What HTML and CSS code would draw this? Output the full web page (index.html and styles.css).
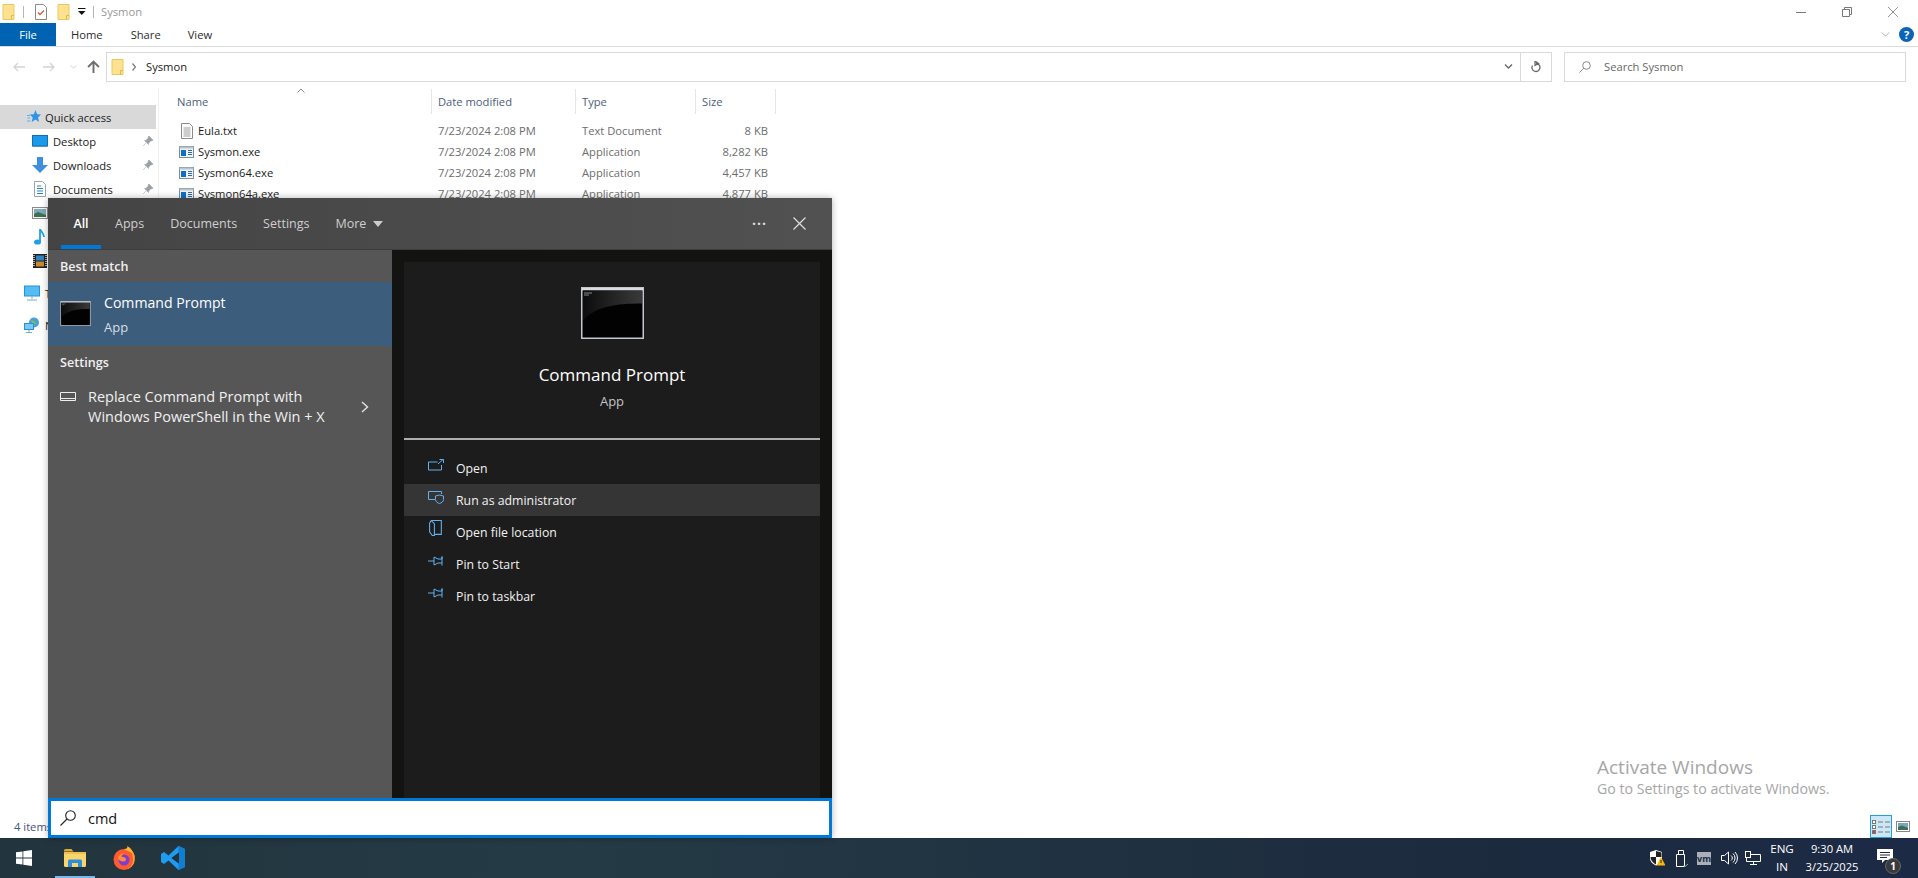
FILE: index.html
```html
<!DOCTYPE html>
<html lang="en">
<head>
<meta charset="utf-8">
<title>Sysmon</title>
<link rel="stylesheet" href="styles.css">
</head>
<body>
<svg class="defs" aria-hidden="true">
  <defs>
    <linearGradient id="cmdglow" x1="0" y1="0" x2="1" y2="0"><stop offset="0" stop-color="#0c0c0c"/><stop offset="1" stop-color="#3a3a3a"/></linearGradient>
  </defs>
  <symbol id="folder" viewBox="0 0 12 16"><path d="M.5.5h11v15H.5z" fill="#ffe28f" stroke="#e9c95f"/><path d="M9 15.5v-4h2.5" fill="none" stroke="#e2b93f"/></symbol>
  <symbol id="exe" viewBox="0 0 15 12"><rect x=".5" y=".5" width="14" height="11" fill="#f2f2f2" stroke="#7f8c99"/><rect x=".5" y=".5" width="14" height="2" fill="#b8c4d0"/><rect x="2" y="4" width="5" height="6" fill="#0e6fc9"/><path d="M9 4.500h4M9 6.500h4M9 8.500h4" stroke="#2d6ba8"/></symbol>
  <symbol id="pin" viewBox="0 0 10 10"><path d="M6 0l4 4-1 1-1-.3-2.200 2.200L5.500 8.500 1.500 4.500 3 4.200 5.300 2 5 1zM3 7L0 10" fill="#9aa0a6" stroke="#9aa0a6" stroke-width=".5"/></symbol>
  <symbol id="cmdicon" viewBox="0 0 63 52"><rect x=".75" y=".75" width="61.500" height="50.500" fill="#020202" stroke="#c3c8ce" stroke-width="1.500"/><rect x="1" y="1" width="61" height="2.500" fill="#d8dce1"/><path d="M2 3.500h59v13c-26 0-47 3-59 17z" fill="url(#cmdglow)"/><path d="M3 6h8M3 8h5" stroke="#aaa" stroke-width=".8"/></symbol>
  <symbol id="pinmenu" viewBox="0 0 16 12"><path d="M0 6h6M6 2l4 2h4V1.500M14 1.500v9M14 8h-4l-4 2V2" fill="none" stroke="#63b0ee"/></symbol>
</svg>

<div class="window">
  <header class="titlebar">
    <svg class="qa-folder"><use href="#folder"/></svg>
    <span class="qa-sep"></span>
    <svg class="qa-check" viewBox="0 0 12 16"><path d="M.5.5h8l3 3v12H.5z" fill="#fff" stroke="#8a8a8a"/><path d="M3 8.500l2 2 4-4" fill="none" stroke="#e2572b" stroke-width="1.300"/></svg>
    <svg class="qa-folder qa-folder2"><use href="#folder"/></svg>
    <svg class="qa-drop" viewBox="0 0 8 8"><path d="M0 0h7.500v1H0zM0 3h7.500L3.750 7z" fill="#111"/></svg>
    <span class="qa-sep qa-sep2"></span>
    <span class="win-title">Sysmon</span>
    <div class="win-controls">
      <svg class="ctl" viewBox="0 0 10 10"><path d="M0 5.500h10" stroke="#777"/></svg>
      <svg class="ctl" viewBox="0 0 10 10"><path d="M.5 2.500h7v7h-7zM2.500 2.500v-2h7v7h-2" fill="none" stroke="#777"/></svg>
      <svg class="ctl" viewBox="0 0 10 10"><path d="M0 0l10 10M10 0L0 10" stroke="#777" stroke-width=".8"/></svg>
    </div>
  </header>

  <nav class="tabs">
    <span class="file-tab">File</span>
    <span class="tab tab-home">Home</span>
    <span class="tab tab-share">Share</span>
    <span class="tab tab-view">View</span>
    <svg class="rib-chev" viewBox="0 0 10 6"><path d="M.5.500L5 5 9.500.5" fill="none" stroke="#999"/></svg>
    <span class="help">?</span>
  </nav>

  <div class="addr-row">
    <svg class="nav-arrow nav-back" viewBox="0 0 12 10"><path d="M12 5H1M5 1L1 5l4 4" fill="none" stroke="#d4d4d4" stroke-width="1.300"/></svg>
    <svg class="nav-arrow nav-fwd" viewBox="0 0 12 10"><path d="M0 5h11M7 1l4 4-4 4" fill="none" stroke="#d4d4d4" stroke-width="1.300"/></svg>
    <svg class="nav-down" viewBox="0 0 7 4"><path d="M.5.500L3.500 3 6.500.5" fill="none" stroke="#d4d4d4"/></svg>
    <svg class="nav-up" viewBox="0 0 12 12"><path d="M6 12V1.500M1 6.500l5-5 5 5" fill="none" stroke="#6f6f6f" stroke-width="1.800"/></svg>
    <div class="addr">
      <svg class="addr-folder"><use href="#folder"/></svg>
      <svg class="addr-chev" viewBox="0 0 4 8"><path d="M.5.500L3.500 4 .5 7.500" fill="none" stroke="#777" stroke-width="1.200"/></svg>
      <span class="addr-text">Sysmon</span>
      <svg class="addr-drop" viewBox="0 0 8 5"><path d="M.5.500L4 4 7.500.5" fill="none" stroke="#666" stroke-width="1.300"/></svg>
      <span class="addr-refresh"><svg class="refresh" viewBox="0 0 10 12"><path d="M5 2.500a4 4 0 1 1-3.500 2M4 0v4.500L7.500 2.500z" fill="none" stroke="#666" stroke-width="1.300"/></svg></span>
    </div>
    <div class="search">
      <svg class="search-icon" viewBox="0 0 12 12"><circle cx="7.500" cy="4.500" r="3.800" fill="none" stroke="#888"/><path d="M4.800 7.200L.5 11.500" stroke="#888"/></svg>
      <span class="search-text">Search Sysmon</span>
    </div>
  </div>

  <main class="main">
    <aside class="side">
      <div class="side-item side-active">
        <svg class="star" viewBox="0 0 14 14"><path d="M8.500 0l1.600 4.300 3.900.3-3 2.900 1 4.500-3.500-2.400-3.800 2.400 1-4.500-3-2.900 4.200-.3z" fill="#2f93e6"/><path d="M0 5.500h3M.5 8h2.500M0 11h3.500" stroke="#5aaeea"/></svg>
        <span>Quick access</span>
      </div>
      <div class="side-item sub">
        <svg class="side-ic" viewBox="0 0 16 12"><rect x=".5" y=".5" width="15" height="10.500" fill="#1a9ae8" stroke="#0c6fb8"/><path d="M1 11.500h14" stroke="#5d8fb3"/></svg>
        <span class="side-label">Desktop</span><svg class="pin"><use href="#pin"/></svg>
      </div>
      <div class="side-item sub">
        <svg class="side-ic" viewBox="0 0 16 16"><path d="M5 0h6v8h5l-8 8-8-8h5z" fill="#3d8fe0"/></svg>
        <span class="side-label">Downloads</span><svg class="pin"><use href="#pin"/></svg>
      </div>
      <div class="side-item sub">
        <svg class="side-ic" viewBox="0 0 16 16"><path d="M2.500.5h8l3 3v12h-11z" fill="#fff" stroke="#9aa3ab"/><path d="M5 5h4M5 7.500h6M5 10h6M5 12.500h6" stroke="#2f84c9"/></svg>
        <span class="side-label">Documents</span><svg class="pin"><use href="#pin"/></svg>
      </div>
      <div class="side-item sub">
        <svg class="side-ic" viewBox="0 0 16 12"><rect x=".5" y=".5" width="15" height="11" fill="#f4f4f4" stroke="#8a8a8a"/><rect x="2" y="2" width="12" height="8" fill="#7fa9bb"/><path d="M2 7l4-2 8 3v2H2z" fill="#3f6f52"/></svg>
        <span class="side-label">Pictures</span>
      </div>
      <div class="side-item sub">
        <svg class="side-ic" viewBox="0 0 16 16"><ellipse cx="5.500" cy="13" rx="3.500" ry="2.600" fill="#1fa0ea"/><path d="M8 13V0c1 3 4 4 4 8" fill="none" stroke="#1fa0ea" stroke-width="1.800"/></svg>
        <span class="side-label">Music</span>
      </div>
      <div class="side-item sub">
        <svg class="side-ic" viewBox="0 0 16 16"><rect x="1" y="1" width="14" height="14" fill="#222"/><path d="M2 2v12M14 2v12" stroke="#ddd" stroke-width="1.500" stroke-dasharray="1 1"/><rect x="4" y="2.500" width="8" height="5" fill="#2c85c4"/><rect x="4" y="8.500" width="8" height="5" fill="#c98a2c"/></svg>
        <span class="side-label">Videos</span>
      </div>
      <div class="side-item tree">
        <svg class="side-ic" viewBox="0 0 16 15"><rect x=".5" y=".5" width="15" height="10" fill="#55bdf2" stroke="#2492d8"/><path d="M8 11v2M3 14.500h10" stroke="#7ea9c6" stroke-width="1.200"/></svg>
        <span>This PC</span>
      </div>
      <div class="side-item tree">
        <svg class="side-ic" viewBox="0 0 16 16"><circle cx="10" cy="5.500" r="5" fill="#4a9fd8"/><path d="M7 3l3 1 2 3-3 1z" fill="#7ec24a"/><rect x=".5" y="6.500" width="9" height="6" fill="#7cc8f2" stroke="#2492d8"/><path d="M5 13v2M2 15.500h6" stroke="#7ea9c6"/></svg>
        <span>Network</span>
      </div>
    </aside>

    <section class="list">
      <div class="list-head">
        <span class="col-name">Name<svg class="sort" viewBox="0 0 8 5"><path d="M.5 4.500L4 1l3.500 3.500" fill="none" stroke="#888"/></svg></span>
        <span class="col-date">Date modified</span>
        <span class="col-type">Type</span>
        <span class="col-size">Size</span>
      </div>
      <div class="row">
        <span class="col-name"><svg class="file-ic" viewBox="0 0 15 16"><path d="M2.500.5h8l3 3v12h-11z" fill="#fff" stroke="#8a8a8a"/><path d="M4.500 5h7M4.500 7h7M4.500 9h7M4.500 11h7M4.500 13h7" stroke="#9a9a9a"/></svg><b>Eula.txt</b></span>
        <span class="col-date">7/23/2024 2:08 PM</span><span class="col-type">Text Document</span><span class="col-size">8 KB</span>
      </div>
      <div class="row">
        <span class="col-name"><svg class="file-ic"><use href="#exe"/></svg><b>Sysmon.exe</b></span>
        <span class="col-date">7/23/2024 2:08 PM</span><span class="col-type">Application</span><span class="col-size">8,282 KB</span>
      </div>
      <div class="row">
        <span class="col-name"><svg class="file-ic"><use href="#exe"/></svg><b>Sysmon64.exe</b></span>
        <span class="col-date">7/23/2024 2:08 PM</span><span class="col-type">Application</span><span class="col-size">4,457 KB</span>
      </div>
      <div class="row">
        <span class="col-name"><svg class="file-ic"><use href="#exe"/></svg><b>Sysmon64a.exe</b></span>
        <span class="col-date">7/23/2024 2:08 PM</span><span class="col-type">Application</span><span class="col-size">4,877 KB</span>
      </div>
      <div class="activate">
        <div class="act-1">Activate Windows</div>
        <div class="act-2">Go to Settings to activate Windows.</div>
      </div>
    </section>
  </main>

  <footer class="status">
    <span>4 items</span>
    <div class="views">
      <span class="view-btn"><svg class="view-ic" viewBox="0 0 18 14"><rect x=".5" y=".5" width="3" height="3" fill="#fff" stroke="#777"/><rect x=".5" y="5.500" width="3" height="3" fill="#fff" stroke="#777"/><rect x=".5" y="10.500" width="3" height="3" fill="#e33" stroke="#777"/><path d="M6 2h5M13 2h5M6 7h5M13 7h5M6 12h5M13 12h5" stroke="#777"/></svg></span>
      <svg class="view-ic2" viewBox="0 0 14 11"><rect x=".5" y=".5" width="13" height="10" fill="#fff" stroke="#888"/><rect x="2" y="2" width="10" height="7" fill="#7aa6bd"/><path d="M2 6l4-1.500L12 7v2H2z" fill="#3f6f52"/></svg>
    </div>
  </footer>

  <div class="taskbar">
    <svg class="tb-start" viewBox="0 0 16 16"><path d="M0 2.300l6.500-.9v6.200H0zM7.300 1.300L16 0v7.600H7.300zM0 8.400h6.500v6.200L0 13.700zM7.300 8.400H16V16l-8.700-1.200z" fill="#fff"/></svg>
    <span class="tb-app tb-active">
      <svg class="tb-ic" viewBox="0 0 22 18"><path d="M0 1.500A1.500 1.500 0 0 1 1.500 0h6l2 2.500H0z" fill="#e0a92e"/><path d="M0 3h22v13.500a1.500 1.500 0 0 1-1.500 1.500h-19A1.500 1.500 0 0 1 0 16.500z" fill="#f8d66d"/><path d="M0 3h22v2H0z" fill="#eec04c"/><path d="M4 18v-6a1.500 1.500 0 0 1 1.500-1.500h11A1.500 1.500 0 0 1 18 12v6h-4v-4H8v4z" fill="#2c8fd8"/></svg>
    </span>
    <span class="tb-app">
      <svg class="tb-ic-fx" viewBox="0 0 24 24"><circle cx="12" cy="13.500" r="10.500" fill="#ff5b2e"/><path d="M12 3C15 5 22 6 23 13 23 9 20 2 15 0c1 2 0 3-3 3z" fill="#ffb52e"/><path d="M20 5c3 3 3.500 8 2 12-1.500 3-4 5-7 6 4-2 6-5 6-9 0-3-1-6-1-9z" fill="#ffa02e"/><circle cx="12" cy="14" r="5.500" fill="#7a3fd0"/><path d="M6 13c0-4 4-6 7-5-3 0-4 2-3 3 2 0 4 .5 4 2.500 0 1-1 2-2.500 2S8 15 6 13z" fill="#ff8a3a"/></svg>
    </span>
    <span class="tb-app">
      <svg class="tb-ic-vs" viewBox="0 0 24 24"><path d="M17.500 0L24 3v18l-6.500 3-10-9.500L3 18l-3-2v-8l3-2 4.500 3.500zM18 6.500L10.500 12l7.500 5.500z" fill="#1f9cf0"/><path d="M17.500 0L24 3v18l-6.500 3z" fill="#0f7fd0"/><path d="M18 6.500L10.500 12l7.500 5.500z" fill="#20333f"/></svg>
    </span>
    <div class="tray">
      <svg class="tr-shield" viewBox="0 0 16 16"><path d="M7 0l6 2v6c0 4-3 6-6 7.500C4 14 1 12 1 8V2z" fill="#fff"/><path d="M7 1v6h5.500V2.500zM7 7H1.500c0 3 2.500 6 5.500 7.500z" fill="#222"/><path d="M12 7l4.500 8.500h-9z" fill="#f5b50a"/><path d="M12 10v3" stroke="#222"/></svg>
      <svg class="tr-usb" viewBox="0 0 12 17"><path d="M2.500 4.500V.5h5v4zM.5 4.500h8v12h-8z" fill="none" stroke="#fff"/><path d="M7.500 15.500l1.500 1 3-2.500" fill="none" stroke="#9aa"/></svg>
      <span class="tr-vm">vm</span>
      <svg class="tr-vol" viewBox="0 0 17 14"><path d="M.5 4.500h3l4-3.500v12l-4-3.500h-3z" fill="none" stroke="#fff"/><path d="M10 4.500a3 3 0 0 1 0 5M12 2.500a6 6 0 0 1 0 9M14 1a8.500 8.500 0 0 1 0 12" fill="none" stroke="#fff"/></svg>
      <svg class="tr-net" viewBox="0 0 16 14"><path d="M4.500 3.500H15.500V10.500H1.500V7M8.500 10.500v3M5 13.500h7" fill="none" stroke="#fff"/><rect x=".5" y=".5" width="5" height="6" fill="#1c2a46" stroke="#fff"/></svg>
      <div class="tr-lang"><div>ENG</div><div>IN</div></div>
      <div class="tr-clock"><div>9:30 AM</div><div>3/25/2025</div></div>
      <span class="tr-note">
        <svg class="tr-note-ic" viewBox="0 0 16 14"><path d="M0 0h16v11H8l-3 3v-3H0z" fill="#fff"/><path d="M3 3.500h10M3 6h10M3 8.500h7" stroke="#1c2a46"/></svg>
        <span class="tr-badge">1</span>
      </span>
    </div>
  </div>

  <div class="panel">
    <div class="p-head">
      <span class="p-tab p-tab-on">All</span>
      <span class="p-tab">Apps</span>
      <span class="p-tab">Documents</span>
      <span class="p-tab">Settings</span>
      <span class="p-tab">More<svg class="p-caret" viewBox="0 0 10 6"><path d="M0 0h10L5 6z" fill="#ccc"/></svg></span>
      <span class="p-dots">···</span>
      <svg class="p-close" viewBox="0 0 13 13"><path d="M.5.500l12 12M12.500.5l-12 12" stroke="#ddd" stroke-width="1.200"/></svg>
    </div>
    <div class="p-body">
      <div class="p-left">
        <div class="p-section">Best match</div>
        <div class="p-best">
          <svg class="p-best-ic"><use href="#cmdicon"/></svg>
          <div><div class="p-best-t">Command Prompt</div><div class="p-best-s">App</div></div>
        </div>
        <div class="p-section p-section2">Settings</div>
        <div class="p-setting">
          <svg class="p-set-ic" viewBox="0 0 16 9"><path d="M.5.500h15v8H.5z" fill="none" stroke="#eee"/><path d="M1 6.500h14" stroke="#eee"/></svg>
          <div class="p-set-t">Replace Command Prompt with Windows PowerShell in the Win + X</div>
          <svg class="p-chev" viewBox="0 0 8 12"><path d="M1 1l5.500 5L1 11" fill="none" stroke="#ddd" stroke-width="1.500"/></svg>
        </div>
      </div>
      <div class="p-right">
        <div class="card">
          <svg class="card-ic"><use href="#cmdicon"/></svg>
          <div class="card-t">Command Prompt</div>
          <div class="card-s">App</div>
          <div class="card-rule"></div>
          <ul class="menu">
            <li><svg class="m-ic" viewBox="0 0 16 12"><path d="M9.500 3H.5v8h13V6M10 5l5-4.500M11.500.5H15.500V4" fill="none" stroke="#63b0ee"/></svg>Open</li>
            <li class="m-hover"><svg class="m-ic" viewBox="0 0 16 14"><path d="M7 9.500H.5v-8h13V4" fill="none" stroke="#63b0ee"/><path d="M11.500 5l4 1v3.500c0 2-2 3.500-4 4-2-.5-4-2-4-4V6z" fill="#353535" stroke="#63b0ee"/></svg>Run as administrator</li>
            <li><svg class="m-ic m-ic-tall" viewBox="0 0 13 15"><path d="M2 .5h9.500v13H5M2 .5L.5 3v8L3 14.500H5V3.500L2 .5" fill="none" stroke="#63b0ee"/></svg>Open file location</li>
            <li><svg class="m-ic"><use href="#pinmenu"/></svg>Pin to Start</li>
            <li><svg class="m-ic"><use href="#pinmenu"/></svg>Pin to taskbar</li>
          </ul>
        </div>
      </div>
    </div>
    <div class="p-search">
      <svg class="p-search-ic" viewBox="0 0 16 16"><circle cx="10.500" cy="5.500" r="4.800" fill="none" stroke="#222" stroke-width="1.100"/><path d="M7 9L.5 15.500" stroke="#222" stroke-width="1.100"/></svg>
      <span>cmd</span>
    </div>
  </div>
</div>
</body>
</html>
```
FILE: styles.css
```css
* { box-sizing: border-box; }
html, body { margin: 0; padding: 0; height: 100%; overflow: hidden; background: #fff; }
body { font-family: "Open Sans", "Noto Sans", sans-serif; font-size: 11.200px; color: #1a1a1a; }
.defs { width: 0; height: 0; display: block; overflow: hidden; }
svg { display: block; flex: none; }

.window { position: relative; width: 1918px; height: 878px; display: flex; flex-direction: column; overflow: hidden; }

.titlebar { height: 23px; display: flex; align-items: center; padding-left: 2px; flex: none; }
.qa-folder { width: 13px; height: 16px; }
.qa-sep { width: 1px; height: 12px; background: #b5b5b5; margin-left: 8px; }
.qa-check { width: 12px; height: 16px; margin-left: 11px; }
.qa-folder2 { margin-left: 10px; }
.qa-drop { width: 8px; height: 8px; margin-left: 8px; }
.qa-sep2 { margin-left: 7px; }
.win-title { margin-left: 7px; color: #999; }
.win-controls { margin-left: auto; display: flex; gap: 36px; padding-right: 20px; }
.ctl { width: 10px; height: 10px; }

.tabs { height: 24px; display: flex; align-items: center; border-bottom: 1px solid #dadbdc; flex: none; }
.file-tab { width: 56px; height: 23px; background: #0063b1; color: #fff; display: flex; align-items: center; justify-content: center; }
.tab { color: #2b2b2b; }
.tab-home { margin-left: 15px; }
.tab-share { margin-left: 28px; }
.tab-view { margin-left: 27px; }
.rib-chev { width: 9px; height: 5px; margin-left: auto; }
.help { width: 15px; height: 15px; border-radius: 50%; background: #0c64b8; color: #fff; font-weight: 700; font-size: 11px; display: flex; align-items: center; justify-content: center; margin: 0 4px 0 9px; }

.addr-row { height: 41px; display: flex; align-items: center; flex: none; padding: 0 12px 2px 13px; }
.nav-arrow { width: 12px; height: 10px; }
.nav-fwd { margin-left: 18px; }
.nav-down { width: 7px; height: 4px; margin-left: 15px; }
.nav-up { width: 13px; height: 13px; margin-left: 10px; }
.addr { width: 1446px; height: 30px; margin-left: 6px; border: 1px solid #d9d9d9; display: flex; align-items: center; padding-left: 4px; }
.addr-folder { width: 13px; height: 16px; }
.addr-chev { width: 4px; height: 8px; margin-left: 8px; }
.addr-text { margin-left: 10px; }
.addr-drop { width: 9px; height: 5px; margin-left: auto; }
.addr-refresh { width: 31px; height: 28px; margin-left: 7px; border-left: 1px solid #d9d9d9; display: flex; align-items: center; justify-content: center; }
.refresh { width: 10px; height: 12px; }
.search { width: 342px; height: 30px; margin-left: 12px; border: 1px solid #d9d9d9; display: flex; align-items: center; padding-left: 14px; }
.search-icon { width: 12px; height: 12px; }
.search-text { margin-left: 13px; color: #666; }

.main { flex: 1; display: flex; min-height: 0; }
.side { width: 159px; padding-top: 17px; border-right: 1px solid #f0f0f0; padding-right: 2px; flex: none; }
.side-item { height: 24px; display: flex; align-items: center; white-space: nowrap; }
.side-active { background: #d9d9d9; padding-left: 27px; gap: 4px; }
.star { width: 14px; height: 14px; }
.sub { padding-left: 32px; }
.tree { padding-left: 24px; gap: 5px; }
.tree:nth-child(8) { margin-top: 8px; }
.tree:nth-child(9) { margin-top: 8px; }
.side-ic { width: 16px; height: 16px; }
.side-label { margin-left: 5px; }
.pin { width: 10px; height: 10px; margin-left: auto; margin-right: 3px; }

.list { flex: 1; position: relative; }
.list-head { height: 25px; margin-top: 1px; margin-bottom: 6px; display: flex; align-items: center; color: #4c607a; }
.list-head span { height: 100%; display: flex; align-items: center; }
.list-head .col-date, .list-head .col-type, .list-head .col-size { border-left: 1px solid #e5e5e5; padding-left: 6px; }
.list-head .col-size { justify-content: flex-start; width: 81px; border-right: 1px solid #e5e5e5; }
.list-head .col-name { padding-left: 18px; }
.col-name { width: 272px; padding-left: 20px; position: relative; display: flex; align-items: center; }
.col-date { width: 144px; }
.col-type { width: 120px; }
.col-size { width: 80px; }
.sort { position: absolute; left: 138px; top: -1px; width: 8px; height: 5px; }
.row { height: 21px; display: flex; align-items: center; color: #6d6d6d; }
.row b { font-weight: 400; color: #1a1a1a; margin-left: 4px; }
.row .col-date, .row .col-type { padding-left: 7px; }
.row .col-size { text-align: right; padding-right: 7px; }
.file-ic { width: 15px; height: 16px; }

.activate { position: absolute; left: 1438px; top: 667px; color: #a6a6a6; }
.act-1 { font-size: 19px; line-height: 24px; }
.act-2 { font-size: 14.200px; line-height: 20px; }

.status { height: 23px; flex: none; display: flex; align-items: center; padding-left: 14px; color: #44557a; position: relative; }
.views { margin-left: auto; display: flex; align-items: center; gap: 4px; padding-right: 8px; }
.view-btn { width: 22px; height: 23px; background: #cce8f6; border: 1px solid #26a0da; display: flex; align-items: center; justify-content: center; }
.view-ic { width: 18px; height: 14px; }
.view-ic2 { width: 14px; height: 11px; }

.taskbar { height: 40px; flex: none; display: flex; align-items: center; background: linear-gradient(90deg, #22343e 0%, #243b45 30%, #1c2a3e 78%, #1c2a46 100%); color: #fff; position: relative; }
.tb-start { width: 16px; height: 16px; margin: 0 23px 0 16px; }
.tb-app { width: 49px; height: 40px; display: flex; align-items: center; justify-content: center; }
.tb-active { width: 40px; box-shadow: inset 0 -2px 0 #76b9ed; margin-right: 4px; }
.tb-ic { width: 22px; height: 18px; }
.tb-ic-fx, .tb-ic-vs { width: 24px; height: 24px; }
.tray { margin-left: auto; display: flex; align-items: center; height: 100%; }
.tr-shield { width: 16px; height: 16px; }
.tr-usb { width: 12px; height: 17px; margin-left: 11px; }
.tr-vm { width: 14px; height: 13px; margin-left: 9px; background: #aab0b6; color: #1c2a46; font-size: 9px; font-weight: 700; line-height: 13px; text-align: center; }
.tr-vol { width: 17px; height: 14px; margin-left: 10px; }
.tr-net { width: 16px; height: 14px; margin-left: 7px; }
.tr-lang { width: 30px; margin-left: 6px; text-align: center; font-size: 11.600px; line-height: 18px; }
.tr-clock { width: 64px; margin-left: 3px; text-align: center; font-size: 11.200px; line-height: 18px; }
.tr-note { width: 66px; height: 100%; position: relative; display: flex; align-items: center; justify-content: center; margin-left: -12px; }
.tr-note-ic { width: 16px; height: 14px; margin-top: -4px; }
.tr-badge { position: absolute; left: 33px; top: 20px; width: 16px; height: 16px; border-radius: 50%; background: #3a3a3a; border: 1px solid #666; font-size: 10px; font-weight: 700; display: flex; align-items: center; justify-content: center; }

.panel { position: absolute; left: 48px; top: 198px; width: 784px; height: 640px; display: flex; flex-direction: column; box-shadow: 0 0 7px rgba(0,0,0,.3); color: #fff; }
.p-head { height: 52px; flex: none; background: linear-gradient(90deg, #444, #515151); display: flex; align-items: center; padding-left: 13px; border-bottom: 1px solid #3d3d3d; }
.p-tab { height: 100%; display: flex; align-items: center; font-size: 12.500px; color: #cfcfcf; padding: 0 12px; margin-right: 2px; }
.p-tab-on { width: 40px; justify-content: center; padding: 0; color: #fff; font-weight: 600; box-shadow: inset 0 -4px 0 #0078d7; margin-right: 2px; }
.p-caret { width: 10px; height: 6px; margin-left: 7px; }
.p-dots { margin-left: auto; font-size: 14px; font-weight: 700; letter-spacing: 1px; color: #ddd; }
.p-close { width: 13px; height: 13px; margin: 0 26px 0 26px; }
.p-body { flex: 1; display: flex; min-height: 0; }
.p-left { width: 344px; background: #565656; flex: none; }
.p-section { height: 32px; display: flex; align-items: center; padding-left: 12px; font-size: 12.600px; font-weight: 600; color: #f0f0f0; }
.p-section2 { height: 32px; padding-top: 1px; }
.p-best { height: 64px; background: #3d5d7c; display: flex; align-items: center; padding: 2px 0 0 12px; gap: 13px; }
.p-best-ic { width: 31px; height: 25px; margin-top: -3px; }
.p-best-t { font-size: 14.100px; line-height: 20px; }
.p-best-s { font-size: 13px; line-height: 20px; margin-top: 4px; color: #d5dde5; }
.p-setting { display: flex; align-items: center; padding: 9px 0 0 12px; }
.p-set-ic { width: 16px; height: 9px; margin-top: -22px; }
.p-set-t { width: 262px; margin-left: 12px; font-size: 14.500px; line-height: 20px; color: #f0f0f0; }
.p-chev { width: 8px; height: 12px; margin-left: 11px; }
.p-right { flex: 1; background: #131311; padding: 12px 12px 0; }
.card { height: 100%; background: #1c1c1c; display: flex; flex-direction: column; align-items: center; padding-top: 25px; }
.card-ic { width: 63px; height: 52px; }
.card-t { margin-top: 24px; font-size: 17px; line-height: 24px; }
.card-s { margin-top: 5px; font-size: 13px; line-height: 18px; color: #c4c4c4; }
.card-rule { width: 100%; height: 2px; background: #aeaeae; margin-top: 28px; }
.menu { list-style: none; margin: 12px 0 0; padding: 0; width: 100%; }
.menu li { height: 32px; display: flex; align-items: center; padding-left: 24px; font-size: 12.300px; color: #f2f2f2; gap: 12px; }
.m-hover { background: #353535; }
.m-ic { width: 16px; height: 14px; margin-top: -6px; }
.m-ic-tall { height: 16px; margin-top: -8px; }
.p-search { height: 40px; flex: none; background: #fff; border: 3px solid #0078d7; display: flex; align-items: center; color: #111; font-size: 14.500px; padding-left: 9px; gap: 12px; }
.p-search-ic { width: 16px; height: 16px; }
```
